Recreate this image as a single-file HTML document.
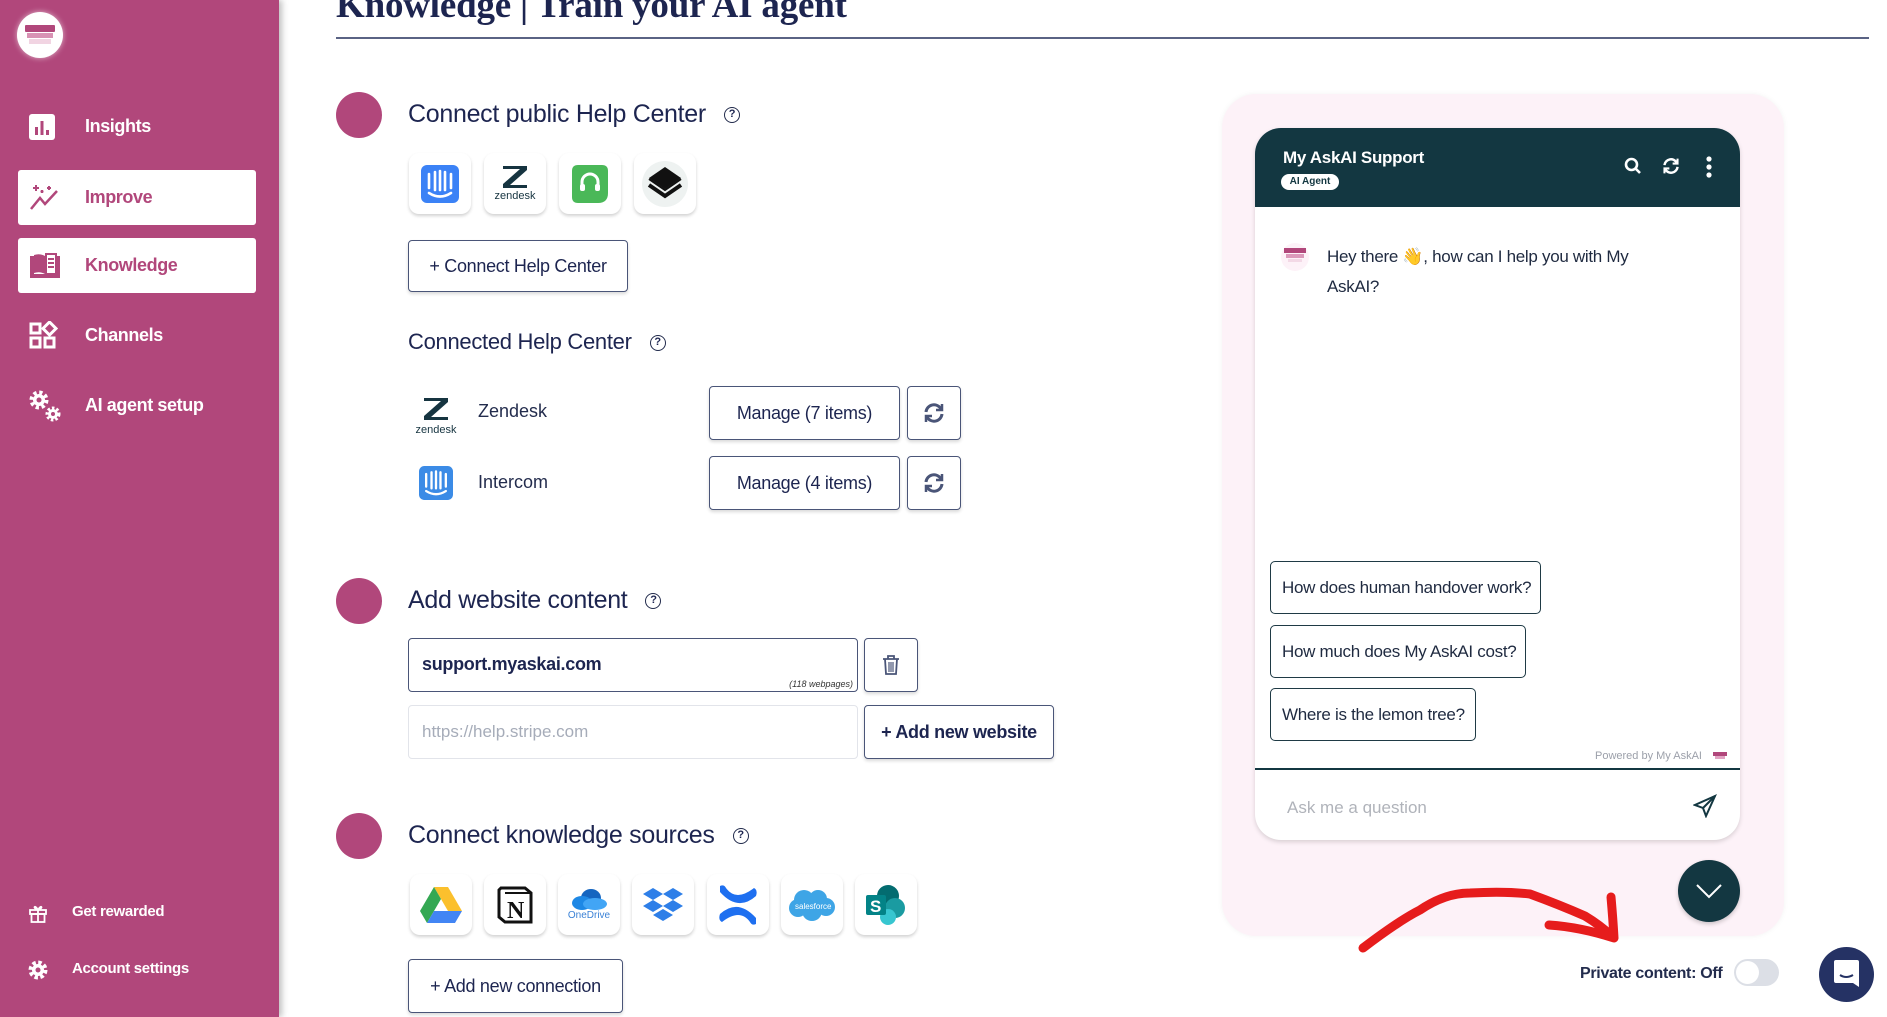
<!DOCTYPE html>
<html><head><meta charset="utf-8"><style>
*{box-sizing:border-box;margin:0;padding:0}
body{width:1887px;height:1017px;overflow:hidden;background:#fff;font-family:"Liberation Sans",sans-serif;color:#232c4d;position:relative}
.a{position:absolute}
.sb{left:0;top:0;width:279px;height:1017px;background:#b1477b;box-shadow:3px 0 6px rgba(0,0,0,.25)}
.nav{position:absolute;left:18px;width:238px;height:55px;border-radius:3px;display:flex;align-items:center;font-weight:bold;font-size:18px;color:#fff;letter-spacing:-.4px}
.nav.on{background:#fff;color:#b1477b}
.nav svg{position:absolute;left:10px}
.nav span{position:absolute;left:67px}
.foot{position:absolute;left:28px;font-weight:bold;font-size:15px;color:#fff;letter-spacing:-.3px}
.foot span{position:absolute;left:44px;top:0;white-space:nowrap}
.h{font-size:25px;letter-spacing:-.3px;white-space:nowrap;color:#1d2550}
.q{display:inline-block;width:16px;height:16px;border:1.6px solid #232c4d;border-radius:50%;font-size:11px;text-align:center;line-height:13px;font-weight:bold;vertical-align:middle;margin-left:18px}
.dot{width:46px;height:46px;border-radius:50%;background:#b1477b;left:336px}
.tile{width:62px;height:61px;border-radius:10px;background:#fff;box-shadow:0 2px 3px rgba(0,0,0,.18);display:flex;align-items:center;justify-content:center}
.btn{border:1.5px solid #4a5578;border-radius:4px;background:#fff;box-shadow:0 2px 3px rgba(0,0,0,.15);display:flex;align-items:center;justify-content:center;font-size:18px;letter-spacing:-.3px;color:#1d2550;white-space:nowrap}
.sug{border:1.5px solid #1f3a45;border-radius:5px;font-size:17px;color:#1f2a40;display:flex;align-items:center;padding-left:11px;letter-spacing:-.3px;background:#fff}
</style></head><body>
<div class="a sb">
 <div class="a" style="left:17px;top:12px;width:46px;height:46px;border-radius:50%;background:#fff;box-shadow:0 0 6px rgba(255,255,255,.6)">
  <div class="a" style="left:8px;top:13px;width:30px;height:7px;background:#b1477b;border-radius:1px"></div>
  <div class="a" style="left:10px;top:21px;width:26px;height:5px;background:#d892b4"></div>
  <div class="a" style="left:12px;top:27px;width:22px;height:5px;background:#f1d4e2"></div>
 </div>
 <div class="nav" style="top:99px"><svg width="28" height="28" viewBox="0 0 28 28"><rect x="1" y="1" width="26" height="26" rx="3" fill="#fff"/><rect x="7" y="14" width="3" height="8" fill="#b1477b"/><rect x="12.5" y="8" width="3" height="14" fill="#b1477b"/><rect x="18" y="17" width="3" height="5" fill="#b1477b"/></svg><span>Insights</span></div>
 <div class="nav on" style="top:170px"><svg width="34" height="30" viewBox="0 0 34 30" fill="none" stroke="#b1477b" stroke-width="2.5"><path d="M3 26 L12 15 L17 21 L29 8"/><path d="M8 2v6M5 5h6M21 3v4M19 5h4M14 7v3M12.5 8.5h3" stroke-width="2"/></svg><span>Improve</span></div>
 <div class="nav on" style="top:238px"><svg width="34" height="28" viewBox="0 0 34 28"><path d="M2 4 L2 26 L32 26 L32 4 L28 4 L28 22 L17 22 L6 22 L6 4Z" fill="#b1477b"/><path d="M6 3 Q12 1 17 4 L17 22 Q12 19 6 21Z" fill="#b1477b"/><rect x="18" y="2" width="10" height="20" fill="#fff" stroke="#b1477b" stroke-width="2"/><path d="M20 7h6M20 11h6M20 15h6" stroke="#b1477b" stroke-width="2"/></svg><span>Knowledge</span></div>
 <div class="nav" style="top:308px"><svg width="30" height="30" viewBox="0 0 30 30" fill="none" stroke="#fff" stroke-width="3"><rect x="3" y="3" width="9" height="9"/><rect x="3" y="17" width="9" height="9"/><rect x="17" y="17" width="9" height="9"/><path d="M21.5 1 L28 7.5 L21.5 14 L15 7.5Z"/></svg><span>Channels</span></div>
 <div class="nav" style="top:378px"><svg width="34" height="34" viewBox="0 0 34 34"><circle cx="11" cy="11" r="7" fill="none" stroke="#fff" stroke-width="5" stroke-dasharray="3 2.5"/><circle cx="11" cy="11" r="6" fill="#fff"/><circle cx="11" cy="11" r="2.5" fill="#b1477b"/><circle cx="25" cy="25" r="5" fill="#fff"/><circle cx="25" cy="25" r="6" fill="none" stroke="#fff" stroke-width="3" stroke-dasharray="2.5 2"/><circle cx="25" cy="25" r="2" fill="#b1477b"/></svg><span>AI agent setup</span></div>
 <div class="foot" style="top:903px"><svg width="20" height="20" viewBox="0 0 20 20" fill="none" stroke="#fff" stroke-width="1.8"><rect x="2" y="7" width="16" height="4"/><rect x="3.5" y="11" width="13" height="8"/><path d="M10 7v12M10 7 C7 1 4 5 10 7 C16 5 13 1 10 7"/></svg><span>Get rewarded</span></div>
 <div class="foot" style="top:960px"><svg width="20" height="20" viewBox="0 0 20 20"><circle cx="10" cy="10" r="7" fill="none" stroke="#fff" stroke-width="5" stroke-dasharray="3.2 2.3"/><circle cx="10" cy="10" r="6" fill="#fff"/><circle cx="10" cy="10" r="2.5" fill="#b1477b"/></svg><span>Account settings</span></div>
</div>

<div class="a" style="left:336px;top:-16px;font-family:'Liberation Serif',serif;font-size:37px;font-weight:bold;color:#1d2550;white-space:nowrap;letter-spacing:-.2px">Knowledge | Train your AI agent</div>
<div class="a" style="left:336px;top:37px;width:1533px;height:2px;background:#5a6384"></div>

<div class="a dot" style="top:92px"></div>
<div class="a h" style="left:408px;top:100px">Connect public Help Center<span class="q">?</span></div>
<div class="a tile" style="left:409px;top:153px"><svg width="38" height="38" viewBox="0 0 38 38"><rect width="38" height="38" rx="6" fill="#3b82f6"/><g stroke="#fff" stroke-width="2.6" stroke-linecap="round" fill="none"><path d="M8 9v14M14 7v18M19 6v19M24 7v18M30 9v14"/><path d="M8 28 Q19 35 30 28"/></g></svg></div>
<div class="a tile" style="left:484px;top:153px;flex-direction:column"><svg width="30" height="24" viewBox="0 0 30 24" fill="#163440"><path d="M3 1h24v4L10 20h17v3H3v-4L20 4H3z"/></svg><div style="font-size:11px;margin-top:1px;color:#163440">zendesk</div></div>
<div class="a tile" style="left:559px;top:153px"><svg width="40" height="42" viewBox="0 0 40 42"><path d="M8 2h24q6 0 6 6v22q0 10-10 10H8q-6 0-6-6V8q0-6 6-6z" fill="#4ab858"/><path d="M12 24v-5a8 8 0 0 1 16 0v5" fill="none" stroke="#fff" stroke-width="3"/><rect x="10" y="21" width="5" height="7" rx="2" fill="#fff"/><rect x="25" y="21" width="5" height="7" rx="2" fill="#fff"/></svg></div>
<div class="a tile" style="left:634px;top:153px"><svg width="46" height="46" viewBox="0 0 46 46"><circle cx="23" cy="23" r="23" fill="#eef2f1"/><path d="M23 6 L39 17 L23 28 L7 17Z" fill="#111"/><path d="M7 24 L23 35 L39 24" fill="none" stroke="#111" stroke-width="4"/><path d="M7 18 L23 29 L39 18" fill="none" stroke="#111" stroke-width="2"/></svg></div>
<div class="a btn" style="left:408px;top:240px;width:220px;height:52px">+ Connect Help Center</div>

<div class="a" style="left:408px;top:329px;font-size:22px;letter-spacing:-.3px;white-space:nowrap;color:#1d2550">Connected Help Center<span class="q">?</span></div>
<div class="a" style="left:410px;top:397px;width:52px;text-align:center"><svg width="30" height="24" viewBox="0 0 30 24" fill="#163440"><path d="M3 1h24v4L10 20h17v3H3v-4L20 4H3z"/></svg><div style="font-size:11px;color:#163440;margin-top:-2px">zendesk</div></div>
<div class="a" style="left:478px;top:401px;font-size:18px">Zendesk</div>
<div class="a btn" style="left:709px;top:386px;width:191px;height:54px">Manage (7 items)</div>
<div class="a btn" style="left:907px;top:386px;width:54px;height:54px"><svg width="22" height="22" viewBox="0 0 22 22" fill="none" stroke="#4a5578" stroke-width="3"><path d="M3 10 A8 8 0 0 1 18 7"/><path d="M19 12 A8 8 0 0 1 4 15"/><path d="M19 2v6h-6" stroke-width="2.5"/><path d="M3 20v-6h6" stroke-width="2.5"/></svg></div>
<div class="a" style="left:419px;top:466px"><svg width="34" height="34" viewBox="0 0 38 38"><rect width="38" height="38" rx="6" fill="#3b8be6"/><g stroke="#fff" stroke-width="2.6" stroke-linecap="round" fill="none"><path d="M8 9v14M14 7v18M19 6v19M24 7v18M30 9v14"/><path d="M8 28 Q19 35 30 28"/></g></svg></div>
<div class="a" style="left:478px;top:472px;font-size:18px">Intercom</div>
<div class="a btn" style="left:709px;top:456px;width:191px;height:54px">Manage (4 items)</div>
<div class="a btn" style="left:907px;top:456px;width:54px;height:54px"><svg width="22" height="22" viewBox="0 0 22 22" fill="none" stroke="#4a5578" stroke-width="3"><path d="M3 10 A8 8 0 0 1 18 7"/><path d="M19 12 A8 8 0 0 1 4 15"/><path d="M19 2v6h-6" stroke-width="2.5"/><path d="M3 20v-6h6" stroke-width="2.5"/></svg></div>

<div class="a dot" style="top:578px"></div>
<div class="a h" style="left:408px;top:586px">Add website content<span class="q">?</span></div>
<div class="a" style="left:408px;top:638px;width:450px;height:54px;border:1.5px solid #4a5578;border-radius:4px"><div class="a" style="left:13px;top:15px;font-size:18px;font-weight:bold;color:#1d2550;letter-spacing:-.3px">support.myaskai.com</div><div class="a" style="right:4px;bottom:2px;font-size:9px;font-style:italic;color:#333">(118 webpages)</div></div>
<div class="a btn" style="left:864px;top:638px;width:54px;height:54px"><svg width="18" height="22" viewBox="0 0 18 22" fill="none" stroke="#4a5578" stroke-width="1.8"><path d="M1 5h16M6 5V2h6v3"/><path d="M3 5l1 15h10l1-15"/><path d="M7 8v10M9 8v10M11 8v10" stroke-width="1.2"/></svg></div>
<div class="a" style="left:408px;top:705px;width:450px;height:54px;border:1.5px solid #e2e4ea;border-radius:4px"><div class="a" style="left:13px;top:16px;font-size:17px;color:#a6acb9">https://help.stripe.com</div></div>
<div class="a btn" style="left:864px;top:705px;width:190px;height:54px;font-weight:bold">+ Add new website</div>

<div class="a dot" style="top:813px"></div>
<div class="a h" style="left:408px;top:821px">Connect knowledge sources<span class="q">?</span></div>
<div class="a tile" style="left:410px;top:874px"><svg width="44" height="38" viewBox="0 0 44 38"><path d="M15 1h14l14 24H29z" fill="#fbc02d"/><path d="M15 1L1 25l7 12L22 13z" fill="#34a853"/><path d="M8 37h28l7-12H15z" fill="#4285f4"/></svg></div>
<div class="a tile" style="left:484px;top:874px"><svg width="40" height="40" viewBox="0 0 40 40"><path d="M6 3h24l6 5v29H10l-6-5V5z" fill="#fff" stroke="#111" stroke-width="3"/><path d="M10 8h26" stroke="#111" stroke-width="2"/><text x="12" y="33" font-family="Liberation Serif" font-weight="bold" font-size="24" fill="#111">N</text></svg></div>
<div class="a tile" style="left:558px;top:874px;flex-direction:column"><svg width="36" height="22" viewBox="0 0 36 22"><ellipse cx="20" cy="10" rx="10" ry="9" fill="#1565c0"/><ellipse cx="11" cy="15" rx="10" ry="7" fill="#1e88e5"/><ellipse cx="24" cy="16" rx="12" ry="6" fill="#42a5f5"/></svg><div style="font-size:10px;color:#3b82d6">OneDrive</div></div>
<div class="a tile" style="left:632px;top:874px"><svg width="40" height="36" viewBox="0 0 40 36" fill="#2e7fe8"><path d="M10 1l10 6-10 6L0 7z"/><path d="M30 1l10 6-10 6-10-6z"/><path d="M10 13l10 6-10 6L0 19z"/><path d="M30 13l10 6-10 6-10-6z"/><path d="M20 22l10 6-10 6-10-6z"/></svg></div>
<div class="a tile" style="left:707px;top:874px"><svg width="44" height="46" viewBox="0 0 44 46"><path d="M4 4 Q8 2 10 6 Q20 20 38 6 Q42 8 40 14 Q22 30 4 10Z" fill="#1e6ff0"/><path d="M40 42 Q36 44 34 40 Q24 26 6 40 Q2 38 4 32 Q22 16 40 36Z" fill="#1e6ff0"/></svg></div>
<div class="a tile" style="left:781px;top:874px"><svg width="48" height="34" viewBox="0 0 48 34"><g fill="#3ea5e6"><circle cx="16" cy="12" r="10"/><circle cx="30" cy="11" r="9"/><circle cx="38" cy="19" r="9"/><circle cx="24" cy="23" r="10"/><circle cx="10" cy="20" r="9"/></g><text x="7" y="21" font-size="8" fill="#fff" font-family="Liberation Sans">salesforce</text></svg></div>
<div class="a tile" style="left:855px;top:874px"><svg width="44" height="44" viewBox="0 0 44 44"><circle cx="24" cy="13" r="11" fill="#036c70"/><circle cx="31" cy="25" r="10" fill="#1a9ba1"/><circle cx="24" cy="34" r="8" fill="#37c6d0"/><rect x="2" y="12" width="20" height="20" rx="2" fill="#038387"/><text x="6" y="29" font-size="17" font-weight="bold" fill="#fff" font-family="Liberation Sans">S</text></svg></div>
<div class="a btn" style="left:408px;top:959px;width:215px;height:54px">+ Add new connection</div>

<!-- chat panel -->
<div class="a" style="left:1222px;top:94px;width:562px;height:842px;background:#fdf2f8;border-radius:34px;box-shadow:0 0 6px rgba(0,0,0,.05)"></div>
<div class="a" style="left:1255px;top:128px;width:485px;height:712px;background:#fff;border-radius:26px;box-shadow:0 2px 5px rgba(0,0,0,.15);overflow:hidden">
 <div class="a" style="left:0;top:0;width:485px;height:79px;background:#133741"></div>
 <div class="a" style="left:28px;top:20px;font-size:17px;font-weight:bold;color:#fff;letter-spacing:-.3px">My AskAI Support</div>
 <div class="a" style="left:26px;top:46px;width:58px;height:16px;background:#fff;border-radius:8px;font-size:10px;text-align:center;line-height:16px;color:#133741;font-weight:bold">AI Agent</div>
 <svg class="a" style="left:369px;top:29px" width="18" height="18" viewBox="0 0 18 18" fill="none" stroke="#fff" stroke-width="2.6"><circle cx="7.5" cy="7.5" r="5.5"/><path d="M11.5 11.5L16 16"/></svg>
 <svg class="a" style="left:407px;top:29px" width="18" height="18" viewBox="0 0 22 22" fill="none" stroke="#fff" stroke-width="3"><path d="M3 10 A8 8 0 0 1 18 7"/><path d="M19 12 A8 8 0 0 1 4 15"/><path d="M19 2v6h-6" stroke-width="2.5"/><path d="M3 20v-6h6" stroke-width="2.5"/></svg>
 <svg class="a" style="left:450px;top:28px" width="8" height="22" viewBox="0 0 8 22" fill="#fff"><circle cx="4" cy="3" r="2.6"/><circle cx="4" cy="11" r="2.6"/><circle cx="4" cy="19" r="2.6"/></svg>
 <div class="a" style="left:26px;top:115px;width:28px;height:28px;border-radius:50%;background:#fdf2f8"><div class="a" style="left:3px;top:5px;width:22px;height:5px;background:#b1477b"></div><div class="a" style="left:5px;top:11px;width:18px;height:4px;background:#dc9abb"></div><div class="a" style="left:7px;top:16px;width:14px;height:3px;background:#f3d9e6"></div></div>
 <div class="a" style="left:72px;top:114px;width:320px;font-size:17px;line-height:30px;color:#1f2a40;letter-spacing:-.3px">Hey there 👋, how can I help you with My AskAI?</div>
 <div class="a sug" style="left:15px;top:433px;width:271px;height:53px">How does human handover work?</div>
 <div class="a sug" style="left:15px;top:497px;width:256px;height:53px">How much does My AskAI cost?</div>
 <div class="a sug" style="left:15px;top:560px;width:206px;height:53px">Where is the lemon tree?</div>
 <div class="a" style="left:340px;top:622px;font-size:11px;color:#9ca0aa">Powered by My AskAI</div>
 <div class="a" style="left:458px;top:624px;width:14px;height:4px;background:#b1477b"></div><div class="a" style="left:460px;top:628px;width:10px;height:3px;background:#e2a4c3"></div>
 <div class="a" style="left:0;top:640px;width:485px;height:2px;background:#133741"></div>
 <div class="a" style="left:32px;top:670px;font-size:17px;color:#b0b3ba">Ask me a question</div>
 <svg class="a" style="left:438px;top:666px" width="24" height="24" viewBox="0 0 24 24" fill="none" stroke="#133741" stroke-width="2"><path d="M22 2L2 11l8 3 3 8z"/><path d="M22 2L10 14"/></svg>
</div>
<div class="a" style="left:1678px;top:860px;width:62px;height:62px;border-radius:50%;background:#133741;box-shadow:0 2px 4px rgba(0,0,0,.2)"><svg class="a" style="left:17px;top:22px" width="28" height="18" viewBox="0 0 28 18" fill="none" stroke="#fff" stroke-width="2"><path d="M2 3L14 15L26 3"/></svg></div>

<svg class="a" style="left:0;top:0" width="1887" height="1017" viewBox="0 0 1887 1017" fill="none" stroke="#e61c1c" stroke-width="9" stroke-linecap="round" stroke-linejoin="round"><path d="M1363 948 Q1400 920 1420 910 Q1445 893 1470 893 Q1505 891 1530 894 Q1560 905 1585 916 Q1600 925 1613 937"/><path d="M1549 925 Q1580 927 1614 938 Q1613 920 1611 897"/></svg>

<div class="a" style="left:1580px;top:965px;font-size:16px;font-weight:bold;color:#232c4d;letter-spacing:-.3px">Private content: Off</div>
<div class="a" style="left:1734px;top:959px;width:45px;height:27px;border-radius:14px;background:#dcdfe6"><div class="a" style="left:2px;top:2px;width:23px;height:23px;border-radius:50%;background:#fff"></div></div>
<div class="a" style="left:1819px;top:947px;width:55px;height:55px;border-radius:50%;background:#253264"><svg class="a" style="left:14px;top:12px" width="27" height="30" viewBox="0 0 27 30"><path d="M3 1h21q2 0 2 2v25l-6-4H3q-2 0-2-2V3q0-2 2-2z" fill="#fff"/><path d="M7 16q6 4 13 0" fill="none" stroke="#253264" stroke-width="2"/></svg></div>
</body></html>
